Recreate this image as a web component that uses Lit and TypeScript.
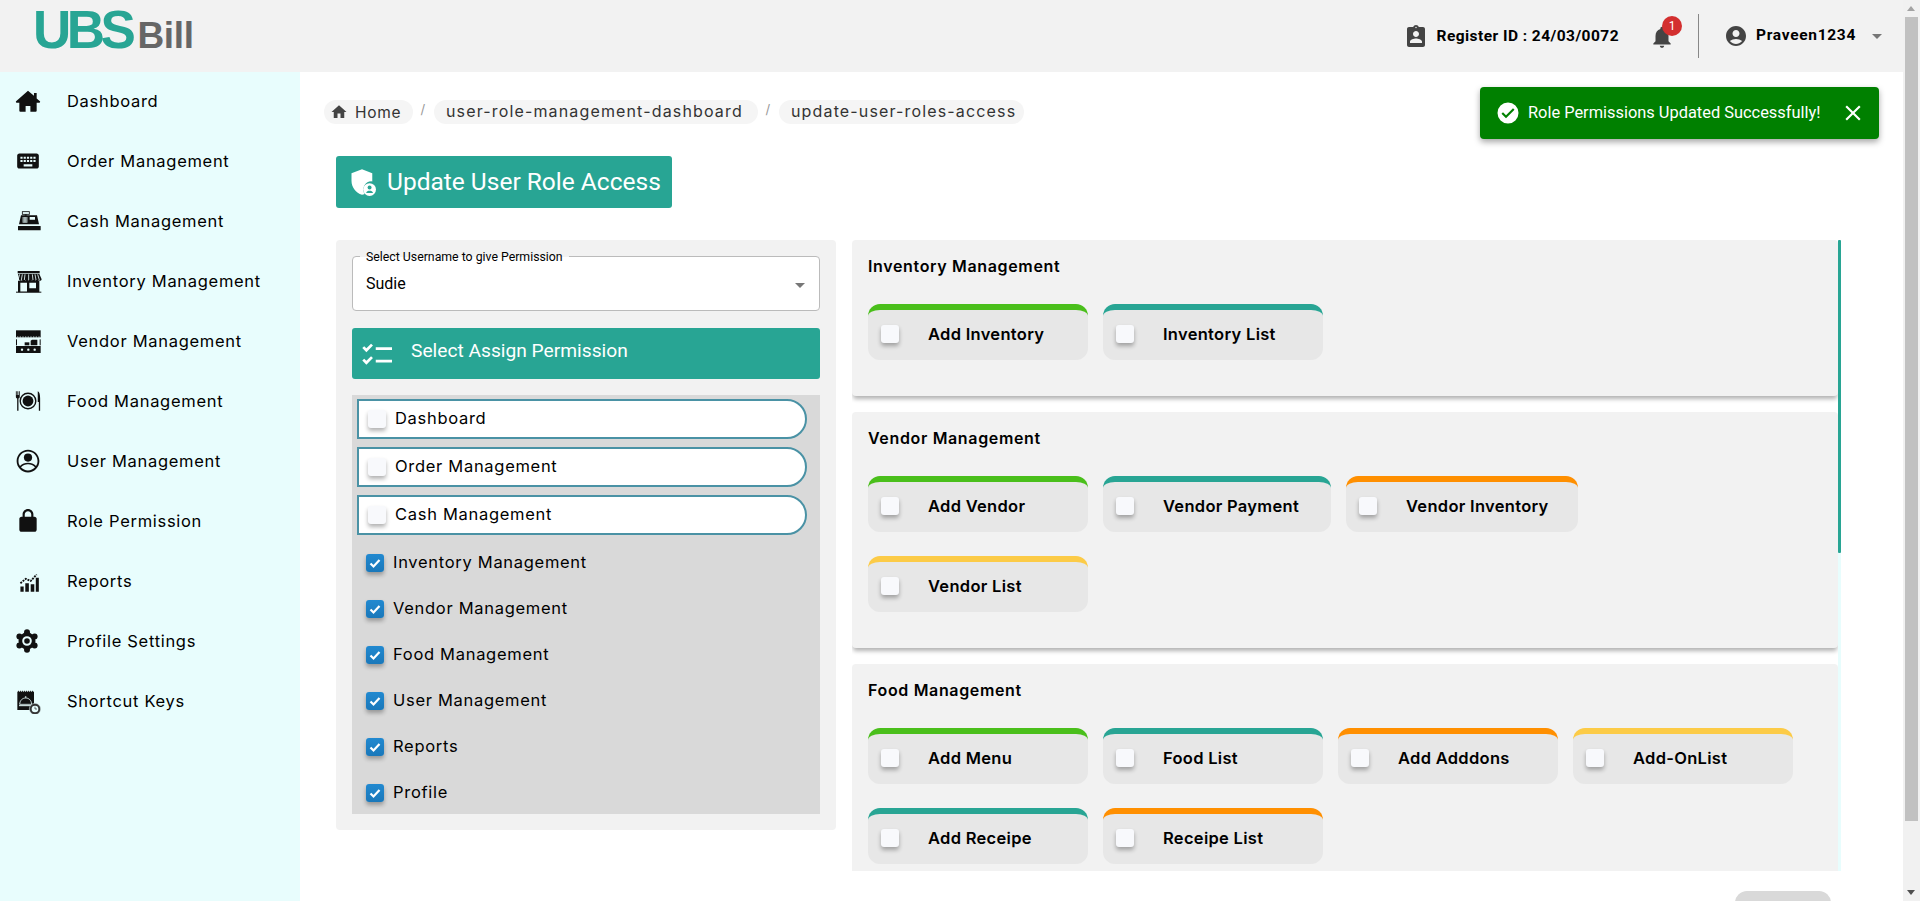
import {LitElement, html, css, svg} from 'lit';
import {customElement} from 'lit/decorators.js';

const ic = (body: unknown, size = 24, box = '0 0 24 24') =>
  html`<svg width="${size}" height="${size}" viewBox="${box}" fill="currentColor">${body}</svg>`;

const BG = '#e8fdfd';

const navItems: [string, unknown][] = [
  ['Dashboard', ic(svg`<path d="M12 2.500L1 12.300c-.5.5-.2 1.200.5 1.200H4V21a1 1 0 001 1h4.800v-5.500h4.400V22H19a1 1 0 001-1v-7.500h2.500c.7 0 1-.7.5-1.200l-3-2.700V4.500h-2.500v2.600z"/>`, 26)],
  ['Order Management', ic(svg`<path d="M20 5H4c-1.100 0-1.990.9-1.990 2L2 17c0 1.100.9 2 2 2h16c1.100 0 2-.9 2-2V7c0-1.100-.9-2-2-2zm-9 3h2v2h-2V8zm0 3h2v2h-2v-2zM8 8h2v2H8V8zm0 3h2v2H8v-2zm-1 2H5v-2h2v2zm0-3H5V8h2v2zm9 7H8v-2h8v2zm0-4h-2v-2h2v2zm0-3h-2V8h2v2zm3 3h-2v-2h2v2zm0-3h-2V8h2v2z"/>`, 26)],
  ['Cash Management', ic(svg`<rect x="37" y="22" width="21" height="8" fill="none" stroke="currentColor" stroke-width="2.500"/><path d="M44 30h6v4h-6z"/><path fill-rule="evenodd" d="M33 33h48l6 27H27zM38 38v17h14V38zm21 0v8h16v-8z"/><path d="M41 38v17M45 38v17M49 38v17" stroke="currentColor" stroke-width="1.500"/><rect x="24" y="65" width="68" height="13" rx="1"/>`, 26, '15 11 78 78')],
  ['Inventory Management', ic(svg`<rect x="23" y="18" width="66" height="7"/><path d="M24 27h64l7 16a5 5 0 01-9 2 5 5 0 01-10 0 5 5 0 01-10 0 5 5 0 01-10 0 5 5 0 01-10 0 5 5 0 01-10 0 5 5 0 01-9-2z"/><path d="M29 28l-5 17M37 28l-3 17M45 28l-2 17M56 28v17M67 28l2 17M75 28l3 17M83 28l5 17" stroke="${BG}" stroke-width="2.500"/><path fill-rule="evenodd" d="M24 47h64v35H24zM31 53v27h20V53zm27 0v17h20V53z"/><rect x="18" y="80" width="76" height="3"/>`, 28, '15 6 84 84')],
  ['Vendor Management', ic(svg`<rect x="18" y="15" width="74" height="21"/><path d="M21 35h4M29 35h4M37 35h4M45 35h4M53 35h4M61 35h4M69 35h4M77 35h4M85 35h4" stroke="${BG}" stroke-width="2.500"/><rect x="18" y="42" width="3" height="18"/><rect x="89" y="42" width="3" height="18"/><rect x="44" y="51" width="14" height="9"/><path d="M62 60V46l4-3h16v17z"/><rect x="18" y="62" width="74" height="21"/><circle cx="36" cy="73" r="3.500" fill="${BG}"/><circle cx="55" cy="73" r="3.500" fill="${BG}"/><circle cx="74" cy="73" r="3.500" fill="${BG}"/>`, 26, '15 8 78 78')],
  ['Food Management', ic(svg`<circle cx="12" cy="12" r="7.200" fill="none" stroke="currentColor" stroke-width="1.300"/><circle cx="12" cy="12" r="5"/><path d="M.8 3h.8v3.500h.6V3h.8v3.500h.6V3h.8v5c0 1-.6 1.500-1.200 1.700V21H2v-11.300C1.300 9.500.8 9 .8 8zM21 3c1.500.5 2.200 3 2.200 6.500V21H22v-8h-1z"/>`, 26)],
  ['User Management', ic(svg`<path d="M12 1.500C6.200 1.500 1.500 6.200 1.500 12S6.200 22.500 12 22.500 22.500 17.800 22.500 12 17.800 1.500 12 1.500zm-6.500 16.300C7.100 15.900 9.400 15 12 15s4.900.9 6.500 2.800c-1.600 1.800-3.900 2.900-6.500 2.900s-4.900-1.100-6.500-2.900zm13.900-1.200C17.400 14.500 14.800 13.500 12 13.500s-5.400 1-7.400 3.100C3.600 15.300 3.200 13.700 3.200 12 3.200 7.100 7.100 3.200 12 3.200s8.800 3.900 8.800 8.800c0 1.700-.4 3.300-1.400 4.600z"/><circle cx="12" cy="8.800" r="3.800"/>`, 26)],
  ['Role Permission', ic(svg`<path d="M18 8h-1V6c0-2.760-2.240-5-5-5S7 3.240 7 6v2H6c-1.100 0-2 .9-2 2v10c0 1.100.9 2 2 2h12c1.100 0 2-.9 2-2V10c0-1.100-.9-2-2-2zM9 6c0-1.660 1.340-3 3-3s3 1.340 3 3v2H9V6z"/>`, 26)],
  ['Reports', ic(svg`<path d="M5 17h3v5H5zM9.500 14h3.300v8H9.500zM14.500 15h3.300v7h-3.300zM19.200 9H22v13h-2.800z"/><path d="M5 14l5-4 4.500 2L20 6" fill="none" stroke="currentColor" stroke-width="1.700" stroke-dasharray="1.800 .9"/>`, 26)],
  ['Profile Settings', ic(svg`<circle cx="12" cy="12" r="8.500"/><circle cx="12" cy="3.200" r="3"/><circle cx="12" cy="20.800" r="3"/><circle cx="4.400" cy="7.600" r="3"/><circle cx="19.600" cy="7.600" r="3"/><circle cx="4.400" cy="16.400" r="3"/><circle cx="19.600" cy="16.400" r="3"/><circle cx="12" cy="12" r="3.800" stroke="${BG}" stroke-width="2"/>`, 24)],
  ['Shortcut Keys', ic(svg`<path d="M22 20h50v55H22z"/><path d="M24 19h3M30 19h3M36 19h3M42 19h3M48 19h3M54 19h3M60 19h3M66 19h3" stroke="currentColor" stroke-width="3"/><path d="M29 58c1-13 9-19 18-19s17 6 18 19z" fill="none" stroke="${BG}" stroke-width="2.500"/><path d="M27 62h39" stroke="${BG}" stroke-width="3"/><circle cx="47" cy="36" r="2.500" fill="${BG}"/><circle cx="75" cy="72" r="17" fill="#333" stroke="${BG}" stroke-width="1.500"/><circle cx="75" cy="72" r="10" fill="${BG}"/><path d="M75 65v7h6" fill="none" stroke="#222" stroke-width="2"/>`, 26, '15 9 78 78')],
];

const sideChecks = ['Inventory Management', 'Vendor Management', 'Food Management', 'User Management', 'Reports', 'Profile'];

const GREEN = '#4abf1b', TEAL = '#28a594', ORANGE = '#ff8f00', YELLOW = '#fccb47';
const groups: {title: string; chips: [string, string, number?][]}[] = [
  {title: 'Inventory Management', chips: [['Add Inventory', GREEN], ['Inventory List', TEAL]]},
  {title: 'Vendor Management', chips: [['Add Vendor', GREEN], ['Vendor Payment', TEAL, 228], ['Vendor Inventory', ORANGE, 232], ['Vendor List', YELLOW]]},
  {title: 'Food Management', chips: [['Add Menu', GREEN], ['Food List', TEAL], ['Add Adddons', ORANGE], ['Add-OnList', YELLOW], ['Add Receipe', TEAL], ['Receipe List', ORANGE]]},
];

@customElement('app-root')
export class AppRoot extends LitElement {
  static styles = css`
    :host {
      display: block;
      width: 1920px;
      height: 901px;
      overflow: hidden;
      background: #fff;
      font-family: Inter, 'Liberation Sans', sans-serif;
      color: #000;
    }
    * { box-sizing: border-box; }
    svg { display: block; flex: none; }
    .shell { display: flex; height: 901px; position: relative; }
    .page { width: 1903px; display: flex; flex-direction: column; }

    .topbar {
      height: 72px;
      background: #f2f2f2;
      display: flex;
      align-items: center;
      font-family: Roboto, sans-serif;
      flex: none;
    }
    .logo {
      margin-left: 33px;
      display: flex;
      align-items: baseline;
      font-family: 'Liberation Sans', sans-serif;
      font-weight: 700;
      height: 72px;
      line-height: 60px;
    }
    .logo b { font-size: 53px; color: #28a594; letter-spacing: -4.500px; }
    .logo i { font-style: normal; font-size: 37px; color: #666; margin-left: 6px; letter-spacing: -.3px; }
    .right { margin-left: auto; display: flex; align-items: center; height: 72px; color: #444; }
    .reg { display: flex; align-items: center; gap: 9px; font-weight: 700; font-size: 15.500px; letter-spacing: .45px; color: #000; margin-right: 30px; }
    .reg svg { color: #444; }
    .bell { position: relative; color: #444; margin-right: 23px; margin-top: 2px; }
    .badge {
      position: absolute;
      top: -8px;
      left: 13px;
      width: 20px;
      height: 20px;
      border-radius: 50%;
      background: #d32f2f;
      color: #fff;
      font-size: 12px;
      text-align: center;
      line-height: 20px;
    }
    .divider { width: 1px; height: 44px; background: #888; margin-right: 25px; }
    .user { display: flex; align-items: center; width: 179px; }
    .name { font-weight: 700; font-size: 15.500px; letter-spacing: .7px; color: #000; margin-left: 8px; margin-top: -3px; }
    .caret { width: 0; height: 0; border: 5px solid transparent; border-top-color: #777; border-bottom: 0; margin-left: 16px; }

    .lower { flex: 1; display: flex; min-height: 0; }
    .side { width: 300px; background: #e8fdfd; flex: none; }
    .nav { height: 60px; display: flex; align-items: center; position: relative; top: -1px; }
    .nav .ico { width: 67px; padding-left: 15px; display: flex; align-items: center; color: #111; }
    .nav span { font-size: 16.500px; letter-spacing: .7px; }

    main { flex: 1; padding: 28px 0 0 24px; min-width: 0; }
    .crumbs { display: flex; align-items: center; height: 24px; font-size: 16px; letter-spacing: 1.150px; color: #333; }
    .chip { height: 24px; border-radius: 12px; background: #f5f5f5; display: flex; align-items: center; padding: 0 12px 2px; white-space: nowrap; }
    .chip.home { width: 89px; padding: 0 0 0 6px; gap: 7px; color: #333; font-size: 15.500px; letter-spacing: .7px; }
    .chip.home svg { color: #444; }
    .chip.one { width: 324px; }
    .chip.two { width: 245px; }
    .sep { width: 21px; text-align: center; color: #999; font-size: 13px; margin-top: -6px; }

    .title {
      margin: 32px 0 32px 12px;
      width: 336px;
      height: 52px;
      border-radius: 3px;
      background: #28a594;
      color: #fff;
      display: flex;
      align-items: center;
      padding-left: 12px;
      gap: 11px;
      font-family: Roboto, sans-serif;
      font-size: 24.500px;
      white-space: nowrap;
    }
    .title span { margin-top: -2px; }

    .cols { display: flex; margin-left: 12px; gap: 16px; align-items: flex-start; }
    .left { width: 500px; height: 590px; background: #f2f2f2; border-radius: 4px; padding: 16px; }
    .select {
      position: relative;
      height: 55px;
      background: #fff;
      border: 1px solid #bbb;
      border-radius: 4px;
      font-family: Roboto, sans-serif;
      font-size: 16px;
      padding: 17px 0 0 13px;
    }
    .legend {
      position: absolute;
      top: -7px;
      left: 7px;
      padding: 0 6px;
      font-size: 12.300px;
      line-height: 14px;
      background: linear-gradient(#f2f2f2 50%, #fff 50%);
    }
    .select .caret { position: absolute; right: 14px; top: 26px; margin: 0; }
    .assign {
      margin-top: 17px;
      height: 51px;
      background: #28a594;
      color: #fff;
      border-radius: 3px;
      display: flex;
      align-items: center;
      padding-left: 10px;
      gap: 19px;
      font-family: Roboto, sans-serif;
      font-size: 19.200px;
    }
    .assign span { margin-top: -6px; }
    .list { margin-top: 16px; height: 419px; background: #d9d9d9; padding: 4px 13px 0 5px; }
    .row {
      height: 40px;
      margin-bottom: 8px;
      background: #fff;
      border: 2px solid #4a92a5;
      border-radius: 0 20px 20px 0;
      display: flex;
      align-items: center;
      padding-left: 9px;
      font-size: 16.500px;
      letter-spacing: .7px;
      gap: 9px;
    }
    .row span { margin-top: -2px; }
    .box { width: 18px; height: 18px; border-radius: 3px; background: #f8f9fc; box-shadow: 0 3px 4px rgba(0,0,0,.3); flex: none; }
    .box.on { background: linear-gradient(#2189d0, #1a78ba); display: flex; align-items: center; justify-content: center; }
    .checked { height: 46px; display: flex; align-items: center; padding-left: 9px; gap: 9px; font-size: 16.500px; letter-spacing: .7px; }
    .checked span { margin-top: -2px; }
    .checks { margin-top: -3px; }

    .rightcol { width: 989px; height: 631px; display: flex; overflow: hidden; }
    .cards { width: 986px; display: flex; flex-direction: column; gap: 16px; padding-bottom: 10px; }
    .card { background: #f2f2f2; border-radius: 4px; box-shadow: 0 4px 4px -1px rgba(0,0,0,.3); padding: 16px 16px 36px; flex: none; }
    .card h3 { margin: 0 0 26px; font-size: 16px; font-weight: 600; line-height: 21px; letter-spacing: .65px; padding-bottom: 1px; }
    .grid { display: flex; flex-wrap: wrap; gap: 24px 15px; max-width: 935px; }
    .perm {
      height: 56px;
      border-radius: 12px;
      border-top: 6px solid;
      background: #e7e7e7;
      display: flex;
      align-items: center;
      padding-left: 13px;
      gap: 29px;
      font-weight: 600;
      font-size: 16.500px;
      letter-spacing: .3px;
    }
    .perm span { margin-top: -2px; }
    .perm .box { margin-top: -2px; }
    .bar { width: 3px; height: 631px; background: #e8fdfd; flex: none; }
    .thumb { height: 313px; background: #28a594; border-radius: 1px; }

    .save { margin: 20px 0 0 1411px; width: 96px; height: 40px; border-radius: 12px; background: #d9d9d9; }

    .scroll { width: 17px; height: 901px; background: #f1f1f1; padding: 17px 2px; position: relative; flex: none; }
    .scroll div { height: 804px; background: #c1c1c1; }
    .arrow { position: absolute; left: 4px; width: 0; height: 0; border: 4.500px solid transparent; }
    .arrow.up { top: 6px; border-top: 0; border-bottom: 5px solid #a3a3a3; }
    .arrow.down { bottom: 6px; border-bottom: 0; border-top: 5px solid #505050; }

    .toast {
      position: absolute;
      left: 1480px;
      top: 87px;
      width: 399px;
      height: 52px;
      background: #008000;
      border-radius: 4px;
      box-shadow: 0 3px 6px rgba(0,0,0,.35);
      color: #fff;
      display: flex;
      align-items: center;
      padding-left: 16px;
      gap: 8px;
      font-family: Roboto, sans-serif;
      font-size: 16.400px;
      white-space: nowrap;
    }
    .toast span { margin-top: -2px; }
    .toast svg:last-child { margin-left: 12px; }
  `;

  private tick() {
    return html`<svg width="14" height="14" viewBox="0 0 14 14" fill="none" stroke="#fff" stroke-width="2.200"><path d="M2.500 7.500l3 3 6-6.500"/></svg>`;
  }

  render() {
    return html`
      <div class="shell">
        <div class="page">
          <header class="topbar">
            <div class="logo"><b>UBS</b><i>Bill</i></div>
            <div class="right">
              <div class="reg">
                ${ic(svg`<path fill-rule="evenodd" d="M19 3h-4.180C14.400 1.840 13.300 1 12 1s-2.400.84-2.820 2H5c-1.100 0-2 .9-2 2v16c0 1.100.9 2 2 2h14c1.100 0 2-.9 2-2V5c0-1.100-.9-2-2-2zM12 2.750c.41 0 .75.34.75.75s-.34.75-.75.75-.75-.34-.75-.75.34-.75.75-.75zM12 7c1.660 0 3 1.340 3 3s-1.340 3-3 3-3-1.340-3-3 1.340-3 3-3zm6 12H6v-1.400c0-2 4-3.100 6-3.100s6 1.100 6 3.100V19z"/>`)}
                Register ID : 24/03/0072
              </div>
              <div class="bell">
                ${ic(svg`<path d="M12 22c1.100 0 2-.9 2-2h-4c0 1.100.9 2 2 2zm6-6v-5c0-3.070-1.630-5.640-4.500-6.320V4c0-.83-.67-1.500-1.500-1.500s-1.500.67-1.500 1.500v.68C7.640 5.360 6 7.920 6 11v5l-2 2v1h16v-1l-2-2z"/>`, 26)}
                <div class="badge">1</div>
              </div>
              <div class="divider"></div>
              <div class="user">
                ${ic(svg`<path d="M12 2C6.480 2 2 6.480 2 12s4.480 10 10 10 10-4.480 10-10S17.520 2 12 2zm0 4c1.930 0 3.500 1.570 3.500 3.500S13.930 13 12 13s-3.500-1.570-3.500-3.500S10.070 6 12 6zm0 14c-2.030 0-4.430-.82-6.140-2.880C7.550 15.800 9.680 15 12 15s4.450.8 6.140 2.120C16.430 19.180 14.030 20 12 20z"/>`)}
                <span class="name">Praveen1234</span>
                <i class="caret"></i>
              </div>
            </div>
          </header>
          <div class="lower">
            <nav class="side">
              ${navItems.map(([label, icon]) => html`<div class="nav"><div class="ico">${icon}</div><span>${label}</span></div>`)}
            </nav>
            <main>
              <div class="crumbs">
                <div class="chip home">${ic(svg`<path d="M10 20v-6h4v6h5v-8h3L12 3 2 12h3v8z"/>`, 18)}Home</div>
                <div class="sep">/</div>
                <div class="chip one">user-role-management-dashboard</div>
                <div class="sep">/</div>
                <div class="chip two">update-user-roles-access</div>
              </div>
              <div class="title">
                ${ic(svg`<path fill-rule="evenodd" d="M12 1L3 4.500v6.500c0 5.500 3.800 10.700 9 12 .8-.2 1.500-.5 2.200-.8A7 7 0 0 1 20.800 11.500V4.500z"/><circle cx="18.500" cy="18.500" r="5.500"/><circle cx="18.500" cy="16.800" r="1.700" fill="#28a594"/><path d="M15.500 21.500c.4-1.500 1.600-2 3-2s2.600.5 3 2z" fill="#28a594"/>`, 28)}
                <span>Update User Role Access</span>
              </div>
              <div class="cols">
                <section class="left">
                  <div class="select">
                    <div class="legend">Select Username to give Permission</div>
                    Sudie
                    <i class="caret"></i>
                  </div>
                  <div class="assign">
                    ${ic(svg`<path d="M1 5l2.500 2.500L8 3M1 15l2.500 2.500L8 13" fill="none" stroke="currentColor" stroke-width="2.200"/><path d="M11 5h13v2.200H11zM11 15h13v2.200H11z"/>`, 30, '0 0 24 21')}
                    <span>Select Assign Permission</span>
                  </div>
                  <div class="list">
                    ${['Dashboard', 'Order Management', 'Cash Management'].map(t => html`<div class="row"><div class="box"></div><span>${t}</span></div>`)}
                    <div class="checks">
                      ${sideChecks.map(t => html`<div class="checked"><div class="box on">${this.tick()}</div><span>${t}</span></div>`)}
                    </div>
                  </div>
                </section>
                <section class="rightcol">
                  <div class="cards">
                    ${groups.map(g => html`
                      <div class="card">
                        <h3>${g.title}</h3>
                        <div class="grid">
                          ${g.chips.map(([label, color, w]) => html`
                            <div class="perm" style="border-top-color:${color};width:${w ?? 220}px">
                              <div class="box"></div><span>${label}</span>
                            </div>`)}
                        </div>
                      </div>`)}
                  </div>
                  <div class="bar"><div class="thumb"></div></div>
                </section>
              </div>
              <div class="save"></div>
            </main>
          </div>
        </div>
        <div class="scroll"><i class="arrow up"></i><div></div><i class="arrow down"></i></div>
        <div class="toast">
          ${ic(svg`<path fill-rule="evenodd" d="M12 1.500a10.500 10.500 0 100 21 10.500 10.500 0 000-21zm-2 15.700l-4.500-4.500 1.500-1.500 3 3 7-7 1.500 1.500z"/>`, 24)}
          <span>Role Permissions Updated Successfully!</span>
          ${ic(svg`<path d="M19 6.410L17.590 5 12 10.590 6.410 5 5 6.410 10.590 12 5 17.590 6.410 19 12 13.410 17.590 19 19 17.590 13.410 12z"/>`, 26)}
        </div>
      </div>
    `;
  }
}
